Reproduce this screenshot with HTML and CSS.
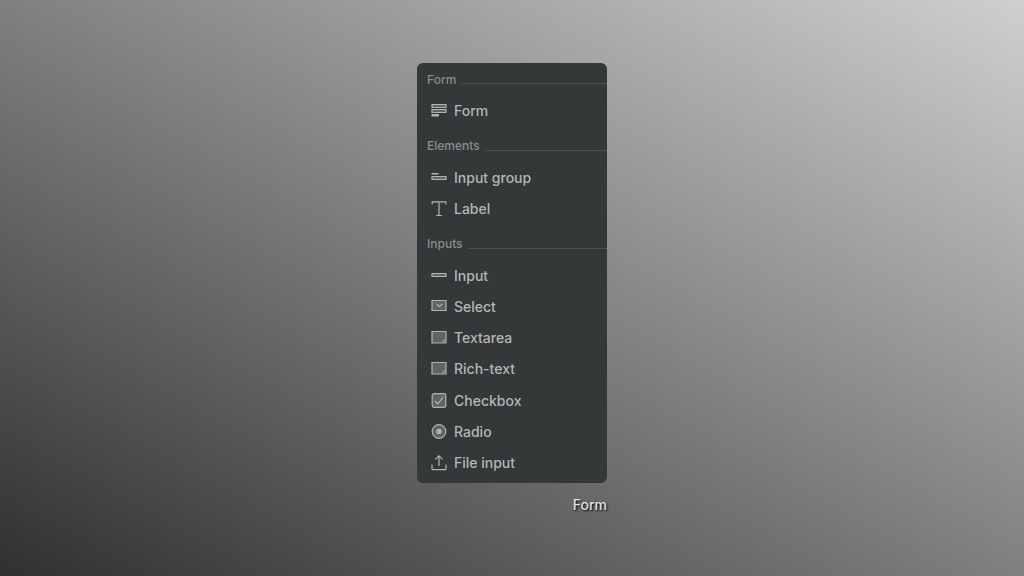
FILE: index.html
```html
<!DOCTYPE html>
<html lang="en">
<head>
    <meta charset="UTF-8">
    <meta name="viewport" content="width=device-width, initial-scale=1.0">
    <title>Form</title>
    <link rel="stylesheet" href="styles.css">
</head>
<body>
    <main class="picker">
        <div class="menu">
            <h2 class="menu-title">Form</h2>
            <button class="menu-item" type="button">
                <svg class="icon" viewBox="0 0 16 16"><path class="shade" d="M1 1.500h14v3H1zM1 6.500h14v3H1z"/><path class="solid" d="M.5 11h7.500v2.500H.5z"/></svg>
                Form
            </button>

            <h2 class="menu-title">Elements</h2>
            <button class="menu-item" type="button">
                <svg class="icon" viewBox="0 0 16 16"><path class="solid" d="M.5 3h7v1.500h-7z"/><path class="shade" d="M1 6.500h14v3H1z"/></svg>
                Input group
            </button>
            <button class="menu-item" type="button">
                <svg class="icon" viewBox="0 0 16 16"><path class="line" d="M1.200 3.500V.8h13.600v2.700M8 .8v13.700M5 14.500h6"/></svg>
                Label
            </button>

            <h2 class="menu-title">Inputs</h2>
            <button class="menu-item" type="button">
                <svg class="icon" viewBox="0 0 16 16"><path class="shade" d="M1 5.500h14v3H1z"/></svg>
                Input
            </button>
            <button class="menu-item" type="button">
                <svg class="icon" viewBox="0 0 16 16"><path class="shade" d="M1 1.500h14v10H1z"/><path class="line" d="M5.500 5l2.800 2.500L11.200 5"/></svg>
                Select
            </button>
            <button class="menu-item" type="button">
                <svg class="icon" viewBox="0 0 16 16"><path class="shade" d="M1 1.500h14v11.500H1z"/><path class="solid" d="M13.500 9V11.500H11z"/></svg>
                Textarea
            </button>
            <button class="menu-item" type="button">
                <svg class="icon" viewBox="0 0 16 16"><path class="shade" d="M1 1.500h14v11.500H1z"/><path class="solid" d="M13.500 9V11.500H11z"/></svg>
                Rich-text
            </button>
            <button class="menu-item" type="button">
                <svg class="icon" viewBox="0 0 16 16"><rect class="shade" x="1.200" y=".7" width="13.600" height="13.600" rx="2"/><path class="line" d="M4 8l2.800 2.800L12 4.300"/></svg>
                Checkbox
            </button>
            <button class="menu-item" type="button">
                <svg class="icon" viewBox="0 0 16 16"><circle class="shade" cx="8" cy="7.500" r="6.800"/><circle class="solid" cx="8" cy="7.500" r="2.700"/></svg>
                Radio
            </button>
            <button class="menu-item" type="button">
                <svg class="icon" viewBox="0 0 16 16"><path class="line" d="M1 9.500v4.200q0 1 1 1h12q1 0 1-1V9.500M8 11V1M4.500 4.400L8 .9l3.500 3.500"/></svg>
                File input
            </button>
        </div>
        <p class="caption">Form</p>
    </main>
</body>
</html>
```
FILE: styles.css
```css
body {
    margin: 0;
    min-height: 100vh;
    display: flex;
    justify-content: center;
    align-items: center;
    font-family: Inter, "Liberation Sans", sans-serif;
    font-weight: 500;
    background: linear-gradient(to top right, #303030, #cfcfcf);
}
.picker {
    width: 190px;
    padding-top: 2px;
}
.menu {
    display: flex;
    flex-direction: column;
    min-height: 420px;
    box-sizing: border-box;
    padding: 1px 0 4px;
    border-radius: 6px;
    background-color: #343838;
}
.menu-title,
.menu-item {
    flex: 1;
    display: flex;
    align-items: center;
    line-height: 20px;
}
.menu-title {
    margin: 0;
    padding-left: 10px;
    gap: 5px;
    font-size: 12px;
    font-weight: 500;
    color: #8a8d8d;
}
.menu-title::after {
    content: "";
    flex: 1;
    height: 1px;
    margin-top: 8px;
    background-color: #4b4f4f;
}
.menu-item + .menu-title {
    margin-top: 4px;
}
.menu-item {
    padding: 0 14px;
    gap: 7px;
    border: none;
    background: none;
    font-family: inherit;
    font-size: 14px;
    font-weight: 500;
    color: #b4b6b6;
    text-align: left;
    cursor: pointer;
}
.menu-item:hover {
    color: #fff;
}
.icon {
    width: 16px;
    height: 16px;
    fill: none;
    stroke: #b2b4b4;
    stroke-width: 1.2;
}
.icon .shade {
    fill: #606464;
}
.icon .solid {
    fill: #b2b4b4;
    stroke: none;
}
.caption {
    margin: 12px 0 0;
    font-size: 14px;
    line-height: 20px;
    text-align: right;
    color: #e2e2e2;
    text-shadow: 1px 1px 2px #000;
}
```
